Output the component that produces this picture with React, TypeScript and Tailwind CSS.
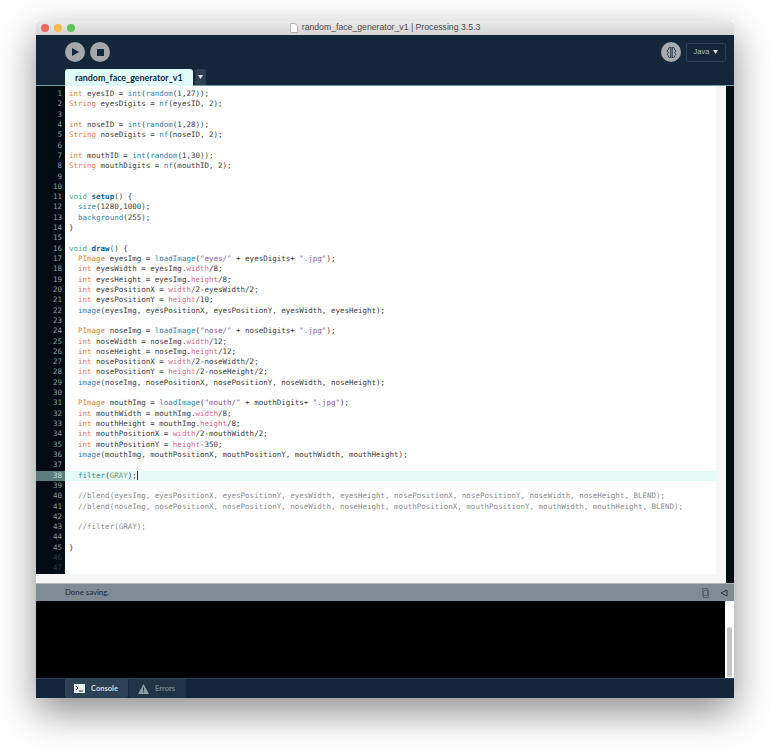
import type { ReactNode } from 'react';

const CODE = [
  'int eyesID = int(random(1,27));',
  'String eyesDigits = nf(eyesID, 2);',
  '',
  'int noseID = int(random(1,28));',
  'String noseDigits = nf(noseID, 2);',
  '',
  'int mouthID = int(random(1,30));',
  'String mouthDigits = nf(mouthID, 2);',
  '',
  '',
  'void setup() {',
  '  size(1280,1000);',
  '  background(255);',
  '}',
  '',
  'void draw() {',
  '  PImage eyesImg = loadImage("eyes/" + eyesDigits+ ".jpg");',
  '  int eyesWidth = eyesImg.width/8;',
  '  int eyesHeight = eyesImg.height/8;',
  '  int eyesPositionX = width/2-eyesWidth/2;',
  '  int eyesPositionY = height/10;',
  '  image(eyesImg, eyesPositionX, eyesPositionY, eyesWidth, eyesHeight);',
  '',
  '  PImage noseImg = loadImage("nose/" + noseDigits+ ".jpg");',
  '  int noseWidth = noseImg.width/12;',
  '  int noseHeight = noseImg.height/12;',
  '  int nosePositionX = width/2-noseWidth/2;',
  '  int nosePositionY = height/2-noseHeight/2;',
  '  image(noseImg, nosePositionX, nosePositionY, noseWidth, noseHeight);',
  '',
  '  PImage mouthImg = loadImage("mouth/" + mouthDigits+ ".jpg");',
  '  int mouthWidth = mouthImg.width/8;',
  '  int mouthHeight = mouthImg.height/8;',
  '  int mouthPositionX = width/2-mouthWidth/2;',
  '  int mouthPositionY = height-350;',
  '  image(mouthImg, mouthPositionX, mouthPositionY, mouthWidth, mouthHeight);',
  '',
  '  filter(GRAY);',
  '',
  '  //blend(eyesImg, eyesPositionX, eyesPositionY, eyesWidth, eyesHeight, nosePositionX, nosePositionY, noseWidth, noseHeight, BLEND);',
  '  //blend(noseImg, nosePositionX, nosePositionY, noseWidth, noseHeight, mouthPositionX, mouthPositionY, mouthWidth, mouthHeight, BLEND);',
  '',
  '  //filter(GRAY);',
  '',
  '}',
  '',
  '',
];

const TOKENS = /("[^"]*")|\b(int|String|PImage)\b|\b(void)\b|\b(setup|draw)\b|\b(random|nf|size|background|loadImage|image|filter)\b(?=\()|\b(width|height)\b|\b(GRAY)\b/g;

// tiny highlighter, same colour groups as the PDE theme
function highlight(line: string): ReactNode {
  if (line.trim().startsWith('//')) return <span className="text-[#8c8c8c]">{line}</span>;
  const out: ReactNode[] = [];
  let last = 0;
  for (const m of line.matchAll(TOKENS)) {
    const i = m.index ?? 0;
    if (i > last) out.push(line.slice(last, i));
    let cls = 'text-[#e57e45]';
    if (m[1]) cls = 'text-[#8a5aa0]';
    else if (m[3]) cls = 'text-[#4da58e]';
    else if (m[4]) cls = 'text-[#006699] font-bold';
    else if (m[5]) cls = 'text-[#2f85ae]';
    else if (m[6]) cls = 'text-[#de6a90]';
    else if (m[7]) cls = 'text-[#7f9a70]';
    out.push(<span key={i} className={cls}>{m[0]}</span>);
    last = i + m[0].length;
  }
  out.push(line.slice(last));
  return out;
}

function intCall(line: string): ReactNode {
  // the int( cast is a blue function, not the orange type
  const marker = '= int(';
  const at = line.indexOf(marker);
  if (at < 0) return highlight(line);
  return (
    <>
      {highlight(line.slice(0, at + 2))}
      <span className="text-[#2f85ae]">int</span>
      {highlight(line.slice(at + 5))}
    </>
  );
}

function CodeEditor() {
  return (
    <div className="flex h-[497px] font-['DejaVu_Sans_Mono','Liberation_Mono',monospace] text-[7.5px] leading-[10.32px]">
      <div className="flex-1 flex flex-col">
        <div className="flex h-[488px]">
          <div className="w-[29px] bg-[#010b12] pt-[3px] text-right overflow-hidden">
            {CODE.map((_, i) => (
              <div
                key={i}
                className={`pr-[3px] ${i === 37 ? 'bg-[#5d7c7c] text-[#c8d8d8]' : i > 44 ? 'text-[#2d3b42]' : 'text-[#8a9aa3]'}`}
              >
                {i + 1}
              </div>
            ))}
          </div>
          <div className="flex-1 bg-white pt-[3px] text-[#3c3c3c] whitespace-pre overflow-hidden">
            {CODE.map((line, i) => (
              <div key={i} className={`pl-[4px] h-[10.32px] ${i === 37 ? 'bg-[#e5fbf8]' : ''}`}>
                {intCall(line)}
                {i === 37 && <span className="inline-block w-px h-[9px] bg-[#33332b] align-middle" />}
              </div>
            ))}
          </div>
          <div className="w-[10px] bg-[#f6f6f6]" />
        </div>
        <div className="h-[9px] bg-[#f6f6f6]" />
      </div>
      <div className="w-[8px] bg-[#010b12]" />
    </div>
  );
}

function Header() {
  return (
    <div className="h-[51px] bg-[#14273a] border-b border-[#6f9ea6] flex flex-col">
      <div className="flex items-center pl-[29px] pr-[8px] pt-[7px]">
        <div className="w-[20px] h-[20px] rounded-full bg-[#a4a8ad] flex items-center justify-center">
          <svg width="7" height="8" viewBox="0 0 7 8"><path d="M0 0 L7 4 L0 8 Z" fill="#14273a" /></svg>
        </div>
        <div className="w-[20px] h-[20px] rounded-full bg-[#a4a8ad] flex items-center justify-center ml-[5px]">
          <div className="w-[7px] h-[7px] bg-[#14273a]" />
        </div>
        <div className="ml-auto w-[20px] h-[20px] rounded-full bg-[#a8abae] flex items-center justify-center">
          <svg width="11" height="13" viewBox="0 0 11 13" fill="none" stroke="#24384c" strokeWidth="1">
            <path d="M4.8 1 V12 M6.2 1 V12" />
            <path d="M4.8 2 C3 1 2 2 2.5 3.5 C1 4 1 6 2.5 6.5 C1 7.5 1 9.5 2.5 10 C2 11.5 3.5 12 4.8 11" />
            <path d="M6.2 2 C8 1 9 2 8.5 3.5 C10 4 10 6 8.5 6.5 C10 7.5 10 9.5 8.5 10 C9 11.5 7.5 12 6.2 11" />
          </svg>
        </div>
        <div className="ml-[5px] w-[40px] h-[19px] rounded-[2px] border border-[#2c3f52] flex items-center justify-center gap-[4px] text-[7.5px] text-[#b4bcc4] font-['Liberation_Sans',sans-serif]">
          Java
          <svg width="5" height="4" viewBox="0 0 5 4"><path d="M0 0 H5 L2.5 4 Z" fill="#d4d8dc" /></svg>
        </div>
      </div>
      <div className="flex items-end flex-1 pl-[29px] gap-[2px]">
        <div className="w-[128px] h-[17px] -mb-px bg-[#dffcfb] rounded-t-[3px] flex items-center pl-[10px] text-[8.9px] font-bold text-[#14273a] font-['Lato',sans-serif]">
          random_face_generator_v1
        </div>
        <div className="w-[11px] h-[16px] bg-[#2d4054] rounded-t-[3px] flex items-center justify-center">
          <svg width="5" height="4" viewBox="0 0 5 4"><path d="M0 0 H5 L2.5 4 Z" fill="#e6eaee" /></svg>
        </div>
      </div>
    </div>
  );
}

function StatusBar() {
  return (
    <div className="h-[18px] bg-[#808b95] border-t border-[#b0b5ba] border-b-[#3c4650] flex items-center pl-[29px] pr-[6px] pt-px text-[7.8px] text-[#1c2833] font-['Lato',sans-serif]">
      Done saving.
      <svg className="ml-auto" width="9" height="10" viewBox="0 0 9 10" fill="none" stroke="#56616b" strokeWidth="1">
        <rect x="1.5" y="0.5" width="5" height="7" />
        <rect x="2.5" y="2.5" width="5" height="7" />
      </svg>
      <svg className="ml-[10px]" width="8" height="8" viewBox="0 0 8 8" fill="none" stroke="#2b3640" strokeWidth="1">
        <path d="M7 1 L1 4 L7 7 Z" />
      </svg>
    </div>
  );
}

function Console() {
  return (
    <div className="h-[77px] bg-black flex justify-end">
      <div className="w-[9px] bg-white flex flex-col justify-end pb-px">
        <div className="mx-auto w-[5px] h-[50px] bg-[#c6c6c6] rounded-[2px]" />
      </div>
    </div>
  );
}

function Footer() {
  return (
    <div className="h-[20px] bg-[#14273a] border-t border-[#2d4154] flex pl-[29px] font-['Lato',sans-serif] text-[7.5px] font-bold">
      <div className="w-[63px] bg-[#2c4153] rounded-b-[2px] flex items-center pl-[9px] gap-[6px] text-[#d7dde2]">
        <svg width="11" height="9" viewBox="0 0 11 9">
          <rect width="11" height="9" fill="#e8f0f2" />
          <path d="M2 2 L4 4 L2 6" stroke="#14273a" fill="none" />
          <path d="M5 7 H9" stroke="#14273a" />
        </svg>
        Console
      </div>
      <div className="w-[57px] ml-px bg-[#1f3446] rounded-b-[2px] flex items-center pl-[9px] gap-[6px] text-[#76858f]">
        <svg width="11" height="10" viewBox="0 0 11 10">
          <path d="M5.5 0 L11 10 H0 Z" fill="#8d9aa3" />
          <path d="M5.5 3.5 V6.5 M5.5 7.5 V8.7" stroke="#1f3446" />
        </svg>
        Errors
      </div>
    </div>
  );
}

export default function App() {
  return (
    <div className="w-[770px] h-[750px] bg-white pt-[21px] pl-[36px] overflow-hidden">
      <div className="w-[698px] h-[677px] shadow-[0_14px_36px_rgba(0,0,0,0.45)] flex flex-col">
        <div className="h-[14px] bg-gradient-to-b from-[#ebebeb] to-[#d4d4d4] rounded-t-[4px] relative flex items-center justify-center gap-[4px] text-[8.7px] text-[#4c4c4c] font-['Liberation_Sans',sans-serif]">
          <div className="absolute left-[5px] top-[3px] flex gap-[5px]">
            <div className="w-[8px] h-[8px] rounded-full bg-[#ee6a5e]" />
            <div className="w-[8px] h-[8px] rounded-full bg-[#f5bd4f]" />
            <div className="w-[8px] h-[8px] rounded-full bg-[#61c454]" />
          </div>
          <svg width="8" height="10" viewBox="0 0 8 10" fill="#fff" stroke="#9a9a9a" strokeWidth="0.7">
            <path d="M0.5 0.5 H5 L7.5 3 V9.5 H0.5 Z" />
          </svg>
          random_face_generator_v1 | Processing 3.5.3
        </div>
        <Header />
        <CodeEditor />
        <StatusBar />
        <Console />
        <Footer />
      </div>
    </div>
  );
}
